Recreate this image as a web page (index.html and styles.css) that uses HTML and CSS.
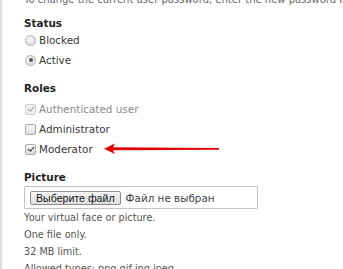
FILE: index.html
```html
<!DOCTYPE html>
<html lang="en">
<head>
    <meta charset="UTF-8">
    <meta name="viewport" content="width=device-width, initial-scale=1.0">
    <title>Edit account</title>
    <link rel="stylesheet" href="styles.css">
</head>
<body>

    <div class="page">
        <p class="intro">To change the current user password, enter the new password in both fields.</p>

        <!-- Statut -->
        <div class="field">
            <div class="field-title">Status</div>
            <div class="option"><span class="radio"></span>Blocked</div>
            <div class="option"><span class="radio checked"></span>Active</div>
        </div>

        <!-- Roles -->
        <div class="field roles">
            <div class="field-title">Roles</div>
            <div class="option disabled"><span class="check checked"></span>Authenticated user</div>
            <div class="option"><span class="check"></span>Administrator</div>
            <div class="option marked">
                <span class="check checked"></span>Moderator
                <svg class="arrow" width="116" height="12" viewBox="0 0 116 12">
                    <polygon points="0,5.8 11,0.6 9,4.3 9,7.3 11,11" fill="#e30000"/>
                    <polygon points="8,4.3 115,4.9 115,6.7 8,7.3" fill="#e30000"/>
                </svg>
            </div>
        </div>

        <!-- Image -->
        <div class="field picture">
            <div class="field-title">Picture</div>
            <div class="file-box">
                <span class="file-button">Выберите файл</span>
                <span class="file-name">Файл не выбран</span>
            </div>
            <div class="description">
                Your virtual face or picture.<br>
                One file only.<br>
                32 MB limit.<br>
                Allowed types: png gif jpg jpeg.
            </div>
        </div>
    </div>

</body>
</html>
```

FILE: styles.css
```css
/* Styles globaux */
body {
    margin: 0;
    font-family: 'DejaVu Sans', 'Noto Sans', sans-serif;
    font-size: 10.4px;
    color: #383838;
    background: #fff;
    overflow: hidden;
}

/* Zone du formulaire, avec l'ombre à gauche */
.page {
    min-height: 269px;
    padding-left: 24px;
    background: linear-gradient(to right, #d8d8d8 0, #ececec 2px, #fafafa 3px, #fff 4px);
}

.intro {
    margin: -7px 0 0;
    font-size: 10px;
    line-height: 13px;
    color: #666;
    white-space: nowrap;
}

.field {
    margin-top: 10px;
}

.roles,
.picture {
    margin-top: 11px;
}

.field-title {
    font-weight: bold;
    line-height: 14px;
    color: #222;
}

.option {
    display: flex;
    align-items: center;
    height: 20px;
    gap: 3px;
    margin-left: 1px;
}

.field:first-of-type .option:first-of-type {
    margin-top: 1px;
}

.roles .field-title {
    margin-bottom: 4px;
}

.option.disabled {
    color: #8a8a8a;
}

.option.marked {
    position: relative;
}

/* Boutons radio */
.radio {
    width: 9px;
    height: 9px;
    border: 1px solid #b0b0b0;
    border-radius: 50%;
    background: radial-gradient(circle at 40% 35%, #f6f6f6 0, #d8d8d8 100%);
    position: relative;
}

.radio.checked::after {
    content: "";
    position: absolute;
    left: 2.5px;
    top: 2.5px;
    width: 4px;
    height: 4px;
    border-radius: 50%;
    background: #555;
}

/* Cases à cocher */
.check {
    width: 9px;
    height: 9px;
    border: 1px solid #a8a8a8;
    border-radius: 2px;
    background: linear-gradient(#fcfcfc, #dcdcdc);
    position: relative;
}

.check.checked::after {
    content: "";
    position: absolute;
    left: 2.5px;
    top: 0.5px;
    width: 2.5px;
    height: 5px;
    border: solid #333;
    border-width: 0 1.5px 1.5px 0;
    transform: rotate(40deg);
}

.disabled .check {
    border-color: #cfcfcf;
    background: #f0f0f0;
}

.disabled .check.checked::after {
    border-color: #a0a0a0;
}

.arrow {
    position: absolute;
    left: 79px;
    top: 4px;
}

/* Champ fichier */
.file-box {
    display: flex;
    align-items: center;
    gap: 5px;
    width: 227px;
    height: 21px;
    margin-top: 2px;
    padding-left: 5px;
    border: 1px solid #c4c4c4;
    border-radius: 1px;
}

.file-button {
    font-family: 'Liberation Sans', Arial, sans-serif;
    font-size: 10.6px;
    line-height: 12px;
    color: #111;
    padding: 0 5px;
    border: 1px solid #8e8e8e;
    border-radius: 2px;
    background: linear-gradient(#f6f6f6, #dedede);
}

.file-name {
    color: #444;
}

.description {
    font-size: 9.7px;
    line-height: 17px;
    color: #555;
}
```
